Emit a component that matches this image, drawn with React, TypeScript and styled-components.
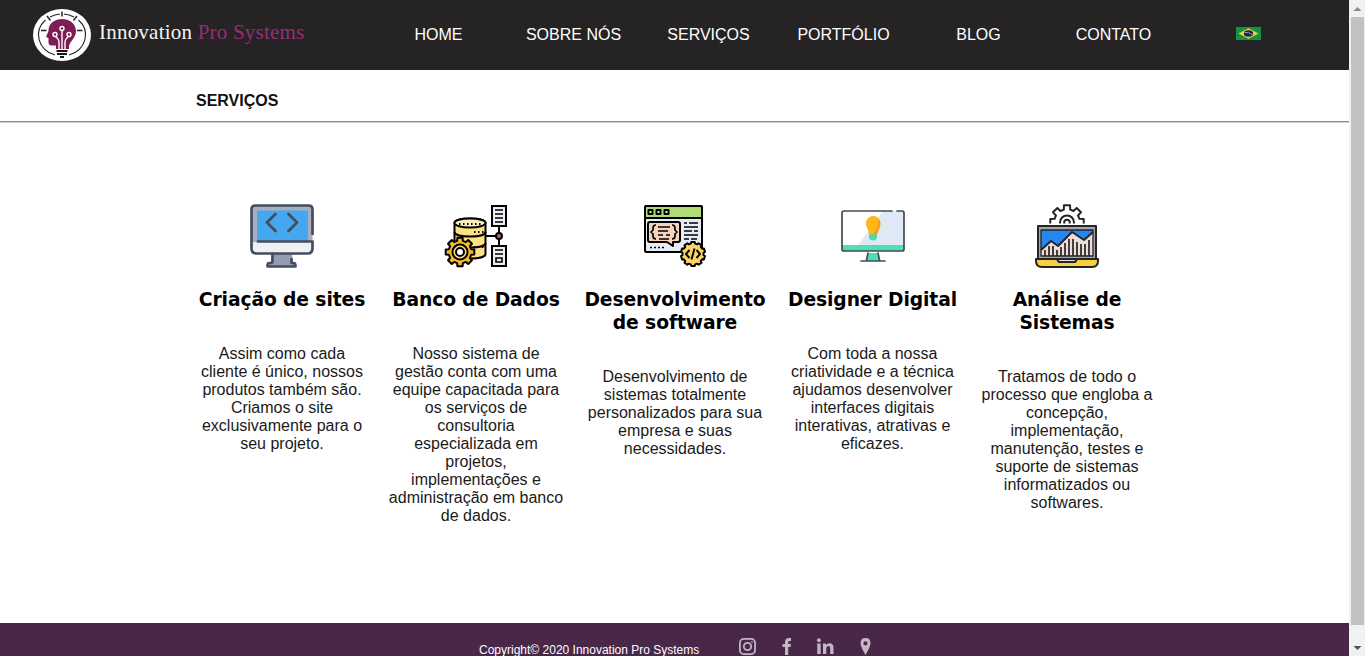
import React from "react";
import styled, { createGlobalStyle } from "styled-components";

const GlobalStyle = createGlobalStyle`
  * { box-sizing: border-box; }
  body { margin: 0; overflow: hidden; background: #fff; color: #1a1a1a;
    font-family: "Liberation Sans", Arial, sans-serif; font-size: 16px; }
  h1, h2, h3, p { margin: 0; }
  svg { display: block; }
`;

const Window = styled.div`display: flex; width: 1365px; height: 656px; overflow: hidden;`;
const Page = styled.div`display: flex; flex-direction: column; width: 1349px; height: 656px;`;

const Header = styled.header`
  display: flex; align-items: center; height: 70px; flex: none;
  padding: 0 33px; background: #252324;
`;
const Brand = styled.div`display: flex; width: 338px; gap: 8px;`;
const BrandName = styled.h1`
  font-family: "Liberation Serif", serif; font-weight: 400; font-size: 21px;
  line-height: 24px; letter-spacing: 0.22px; color: #f4f4f4; white-space: nowrap;
  padding-top: 11px;
  span { color: #962c7d; }
`;
const Nav = styled.nav`display: grid; grid-template-columns: repeat(7, 135px); align-items: center;`;
const NavItem = styled.a`
  display: flex; justify-content: center; color: #fff; line-height: 18px;
`;
const FlagItem = styled(NavItem)`padding-bottom: 3px;`;

const Heading = styled.h2`
  height: 51px; flex: none; padding: 22px 0 0 196px; font-size: 16px; line-height: 18px; color: #111;
`;
const Rule = styled.hr`
  width: 100%; height: 2px; flex: none; margin: 0; border: 0;
  border-top: 1px solid #8d8d8d; border-bottom: 1px solid #d0d0d0;
`;
const Services = styled.main`
  display: grid; grid-template-columns: 194px 194px 204px 191px 198px;
  padding: 81px 0 0 185px; height: 500px; flex: none;
`;
const Card = styled.article`display: flex; flex-direction: column; align-items: center; text-align: center;`;
const CardTitle = styled.h3`
  margin-top: 20px; font-family: "DejaVu Sans", Verdana, sans-serif; font-size: 18.72px;
  line-height: 23px; letter-spacing: -0.1px; color: #000; white-space: pre;
`;
const CardText = styled.p`margin-top: 34px; line-height: 18px; white-space: pre;`;

const Footer = styled.footer`
  display: flex; align-items: flex-start; height: 33px; flex: none;
  padding-left: 479px; background: #492749; color: #fff; overflow: hidden;
`;
const Copyright = styled.p`width: 259px; padding-top: 21px; font-size: 12px; line-height: 12px; white-space: nowrap;`;
const Socials = styled.div`display: flex; padding-top: 14px; gap: 20px;`;

const ScrollBar = styled.div`
  display: flex; flex-direction: column; align-items: center; width: 16px; height: 656px;
  background: #f1f1f1;
`;
const ScrollThumb = styled.div`width: 13px; height: 608px; background: #c1c1c1; margin-left: 1px;`;

function gear(cx: number, cy: number, teeth: number, outer: number, inner: number) {
  const points: string[] = [];
  const step = (Math.PI * 2) / teeth;
  for (let i = 0; i < teeth; i++) {
    const mid = i * step - Math.PI / 2;
    [[-0.32, inner], [-0.23, outer], [0.23, outer], [0.32, inner]].forEach(([offset, r]) => {
      const a = mid + offset * step;
      points.push(`${(cx + r * Math.cos(a)).toFixed(2)} ${(cy + r * Math.sin(a)).toFixed(2)}`);
    });
  }
  return `M${points.join("L")}Z`;
}

const Logo = () => (
  <svg width="58" height="52" viewBox="0 0 58 52">
    <ellipse cx="29" cy="26" rx="29" ry="26" fill="#fff" />
    <g fill="none" stroke="#252324" strokeWidth="1.1">
      <path d="M22 46A23.500 21 0 0 1 12.500 11M17 8A23 21 0 0 1 27 5M31 5A23 21 0 0 1 41 8M45.500 11A23.500 21 0 0 1 36 46" />
      <path strokeWidth="1.500" d="M29 2.500v5M14 7l3.500 4.500M44 7l-3.500 4.500M8 21.500h5.500M44 21.500h5.500" />
    </g>
    <path fill="#7d1c55" d="M23 40v-3.500h-4.500q-3 0-3-3V29l-2.500-1 2.500-6C15 6.500 42.500 5.500 43 22c0 7-6 10-7 15v3z" />
    <g fill="none" stroke="#fff" strokeWidth="1.400">
      <path d="M29 22v19M22.500 27.500q3.500 2.500 3.500 6V41M35.500 27.500q-3.500 2.500-3.500 6V41" />
      <circle cx="29" cy="19.500" r="2" /><circle cx="22" cy="25.500" r="2" /><circle cx="36" cy="25.500" r="2" />
    </g>
    <path stroke="#161314" strokeWidth="2.200" d="M23.500 42h11M24 45h10M27 48h4" />
  </svg>
);

const Flag = () => (
  <svg width="25" height="13" viewBox="0 0 25 13">
    <path fill="#16913f" d="M0 0h25v13H0z" />
    <path fill="#e9d532" d="M2.500 6.500 12.500 1.300l10 5.200-10 5.200z" />
    <ellipse cx="12.500" cy="6.500" rx="4.600" ry="3.300" fill="#1c2452" />
    <path d="M8.500 5.500q4-.8 8 2.200" fill="none" stroke="#a8b7c9" strokeWidth=".8" />
  </svg>
);

const MonitorIcon = () => (
  <svg width="64" height="64" viewBox="0 0 64 64" strokeLinecap="round" strokeLinejoin="round">
    <path fill="#959cb2" d="M22 50h20l1 9h3v4H18v-4h3z" />
    <rect x="1.500" y="1.500" width="61" height="48" rx="5" fill="#a7aec0" />
    <path fill="#45a7ef" d="M7 6.500h51V37H7z" />
    <path fill="#eef0f4" d="M2 38h60v7q0 4-4 4H6q-4 0-4-4z" />
    <g fill="none" stroke="#464d5c" strokeWidth="2.700">
      <path d="M62.500 30V5.500q0-4-4-4h-53q-4 0-4 4v39q0 5 5 5h51q5 0 5-5V37.500H8" />
      <path d="M22.500 50v7q0 2-2 2h-1.500q-1.500 0-1.500 3v.5h28v-.5q0-3-2-3h-2v-4M25.500 10 17 18.500l8.500 8.500M38.500 10 47 18.500 38.500 27" />
    </g>
  </svg>
);

const DatabaseIcon = () => (
  <svg width="64" height="64" viewBox="-1 0 64 64">
    <g stroke="#000" strokeWidth="2">
      <path fill="#fddf86" d="M9.500 19c0-6 31-6 31 0v31c0 6-31 6-31 0z" />
      <ellipse cx="25" cy="19" rx="15.500" ry="4.500" fill="#fceeb8" />
      <path fill="none" d="M9.500 28c0 6 31 6 31 0M9.500 39c0 6 31 6 31 0M41 32h11M54 21v22" />
      <path fill="#ececf2" d="M47 2h14v20H47zM47 42h14v20H47z" />
      <circle cx="54" cy="32" r="3" fill="#cc5960" />
      <path fill="none" strokeWidth="1.600" d="M50 6h8M50 10h8M50 14h8M50 18h8M50 46h8M50 50h8M51 54h6v4h-6z" />
      <path fill="none" strokeDasharray="1.500 2.500" d="M14 20h24M29 28h10M29 43h10" />
      <path fill="#f6b928" strokeLinejoin="round" d={gear(15, 48, 8, 14.5, 11.5)} />
      <circle cx="15" cy="48" r="7.500" fill="#fee38f" /><circle cx="15" cy="48" r="4" fill="#fff" />
    </g>
  </svg>
);

const SoftwareIcon = () => (
  <svg width="64" height="64" viewBox="1 0 64 64">
    <g stroke="#000" strokeWidth="2" strokeLinejoin="round">
      <rect x="3" y="2" width="57" height="46" rx="1.500" fill="#e6ebf4" />
      <path fill="#b0dc78" d="M3 3.500Q3 2 4.500 2h54Q60 2 60 3.500V14H3z" />
      <path fill="#e2f2cc" d="M6.500 6h4v4h-4zM14.500 6h4v4h-4zM22.500 6h4v4h-4z" />
      <path fill="#f5d4bb" d="M8 18h28q2 0 2 2v16q0 2-2 2h-5v4l-6-4H8q-2 0-2-2V20q0-2 2-2z" />
      <path fill="none" strokeWidth="1.700" d="M14 21q-3 0-3 3v2l-2 2 2 2v2q0 3 3 3M30 21q3 0 3 3v2l2 2-2 2v2q0 3-3 3M16 23h12M16 27h10M16 31h5M24 31h4M17 35h10" />
      <path fill="none" strokeWidth="1.500" d="M42 19h3M47 19h9M42 23h14M42 27h8M52 27h4M42 31h14M42 35h5M49 35h6M8 43.500h2M12 43.500h2M16 43.500h2M20 43.500h2" />
      <path fill="#fcd364" d={gear(51, 50, 10, 12.2, 10.6)} />
      <path fill="none" strokeWidth="1.900" d="m47.500 46-3.500 4 3.500 4M54.500 46l3.500 4-3.500 4M52.500 44.500l-3 11" />
    </g>
  </svg>
);

const DesignIcon = () => (
  <svg width="64" height="64" viewBox="0 0 64 64">
    <path fill="#fff" d="M1 7h62v40H1z" />
    <path fill="#dfe8f5" d="M42 7h21v34H17z" />
    <path fill="#50dfb5" d="M1 41h62v6H1zM27 49h10l2 8H25z" />
    <path fill="#ffb51e" d="M28 31c0-6-3-7-3-11.500 0-10 14.500-10 14.500 0C39.500 24 36 25 36 31z" />
    <path fill="#f59f14" d="M31 31c5-5 7-11 6-16.500 5 5 1 9-1 16.500z" />
    <path fill="#46ddb2" d="M28 30.500h8V34q-1 2.500-4 2.500T28 34z" />
    <path fill="none" stroke="#454b54" strokeWidth="1.700" strokeLinecap="round" d="M51 7H3Q1 7 1 9v36q0 2 2 2h58q2 0 2-2V9q0-2-2-2h-5M20 57h24M27 49l-1.500 7M37 49l1.500 7" />
  </svg>
);

const AnalysisIcon = () => (
  <svg width="64" height="64" viewBox="0 0 64 64">
    <defs><clipPath id="gear-top"><path d="M0 0h64v19.500H0z" /></clipPath></defs>
    <g stroke="#24242a" strokeWidth="2" strokeLinejoin="round">
      <g clipPath="url(#gear-top)">
        <path fill="#fff" d={gear(32, 18, 8, 17, 12.8)} />
        <circle cx="32" cy="18.500" r="7" fill="none" /><circle cx="32" cy="18.500" r="2.800" fill="none" />
      </g>
      <path fill="#aaa6a3" d="M3 22h58v34H3z" />
      <path fill="#2388f1" stroke="none" d="M6 26h52v26H6z" />
      <path fill="#eddfd6" stroke="none" d="m6 46 10-9 7 5 14-14 12 8 9-8v24H6z" />
      <path fill="none" d="m6 46 10-9 7 5 14-14 12 8 9-8" />
      <path fill="none" strokeWidth="1.300" d="M6 26h52v26H6z" />
      <path fill="none" strokeWidth="1.700" d="M10 52v-6M14 52V42M18 52V42M22 52v-6M26 52v-9M30 52V39M34 52V35M38 52V35M42 52V38M46 52V40M50 52V40M54 52V36" />
      <path fill="#f8cf3e" d="M1 55h21l2 3h16l2-3h21v2q0 6-6 6H7q-6 0-6-6z" />
      <path fill="#e5e4e5" d="M22 55h20l-2 3H24z" />
    </g>
  </svg>
);

const services = [
  { Icon: MonitorIcon, title: "Criação de sites", text: "Assim como cada\ncliente é único, nossos\nprodutos também são.\nCriamos o site\nexclusivamente para o\nseu projeto." },
  { Icon: DatabaseIcon, title: "Banco de Dados", text: "Nosso sistema de\ngestão conta com uma\nequipe capacitada para\nos serviços de\nconsultoria\nespecializada em\nprojetos,\nimplementações e\nadministração em banco\nde dados." },
  { Icon: SoftwareIcon, title: "Desenvolvimento\nde software", text: "Desenvolvimento de\nsistemas totalmente\npersonalizados para sua\nempresa e suas\nnecessidades." },
  { Icon: DesignIcon, title: "Designer Digital", text: "Com toda a nossa\ncriatividade e a técnica\najudamos desenvolver\ninterfaces digitais\ninterativas, atrativas e\neficazes." },
  { Icon: AnalysisIcon, title: "Análise de\nSistemas", text: "Tratamos de todo o\nprocesso que engloba a\nconcepção,\nimplementação,\nmanutenção, testes e\nsuporte de sistemas\ninformatizados ou\nsoftwares." },
];

const SocialIcons = () => (
  <Socials>
    <svg width="19" height="19" viewBox="0 0 19 19" fill="none" stroke="#c3b7c3" strokeWidth="1.800">
      <rect x="1.900" y="1.900" width="15.200" height="15.200" rx="4" /><circle cx="9.500" cy="9.500" r="3.700" />
      <circle cx="14" cy="5" r=".5" strokeWidth="1" />
    </svg>
    <svg width="19" height="19" viewBox="0 0 19 19" fill="#c3b7c3">
      <path d="M8 18v-8H5.500V7H8V5q0-4 4-4h2v3h-1.500q-1.300 0-1.300 1.500V7H14l-.5 3h-2.300v8z" />
    </svg>
    <svg width="19" height="19" viewBox="0 0 19 19" fill="#c3b7c3">
      <circle cx="2.900" cy="3.200" r="1.900" />
      <path d="M1.300 6.500h3.300V17H1.300zM7 6.500h3.100V8q1-1.800 3.400-1.800 4 0 4 4.500V17h-3.300v-5.500q0-2.400-1.800-2.400-2.100 0-2.100 2.500V17H7z" />
    </svg>
    <svg width="21" height="19" viewBox="0 0 21 19" fill="#c3b7c3">
      <path fillRule="evenodd" d="M10.500 1q5 0 5 5.200 0 3-5 11.800-5-8.800-5-11.800Q5.500 1 10.500 1m0 3.200a2.100 2.100 0 1 0 0 4.200 2.100 2.100 0 0 0 0-4.200" />
    </svg>
  </Socials>
);

export default function App() {
  return (
    <Window>
      <GlobalStyle />
      <Page>
        <Header>
          <Brand><Logo /><BrandName>Innovation <span>Pro Systems</span></BrandName></Brand>
          <Nav>
            {["HOME", "SOBRE NÓS", "SERVIÇOS", "PORTFÓLIO", "BLOG", "CONTATO"].map((label) => (
              <NavItem key={label}>{label}</NavItem>
            ))}
            <FlagItem><Flag /></FlagItem>
          </Nav>
        </Header>
        <Heading>SERVIÇOS</Heading>
        <Rule />
        <Services>
          {services.map(({ Icon, title, text }) => (
            <Card key={title}>
              <Icon />
              <CardTitle>{title}</CardTitle>
              <CardText>{text}</CardText>
            </Card>
          ))}
        </Services>
        <Footer>
          <Copyright>Copyright© 2020 Innovation Pro Systems</Copyright>
          <SocialIcons />
        </Footer>
      </Page>
      <ScrollBar>
        <svg width="16" height="17" viewBox="0 0 16 17"><path fill="#8b8b8b" d="M4.500 11 8.500 7l4 4z" /></svg>
        <ScrollThumb />
        <svg width="16" height="31" viewBox="0 0 16 31"><path fill="#505050" d="M4.500 21h8l-4 4z" /></svg>
      </ScrollBar>
    </Window>
  );
}
